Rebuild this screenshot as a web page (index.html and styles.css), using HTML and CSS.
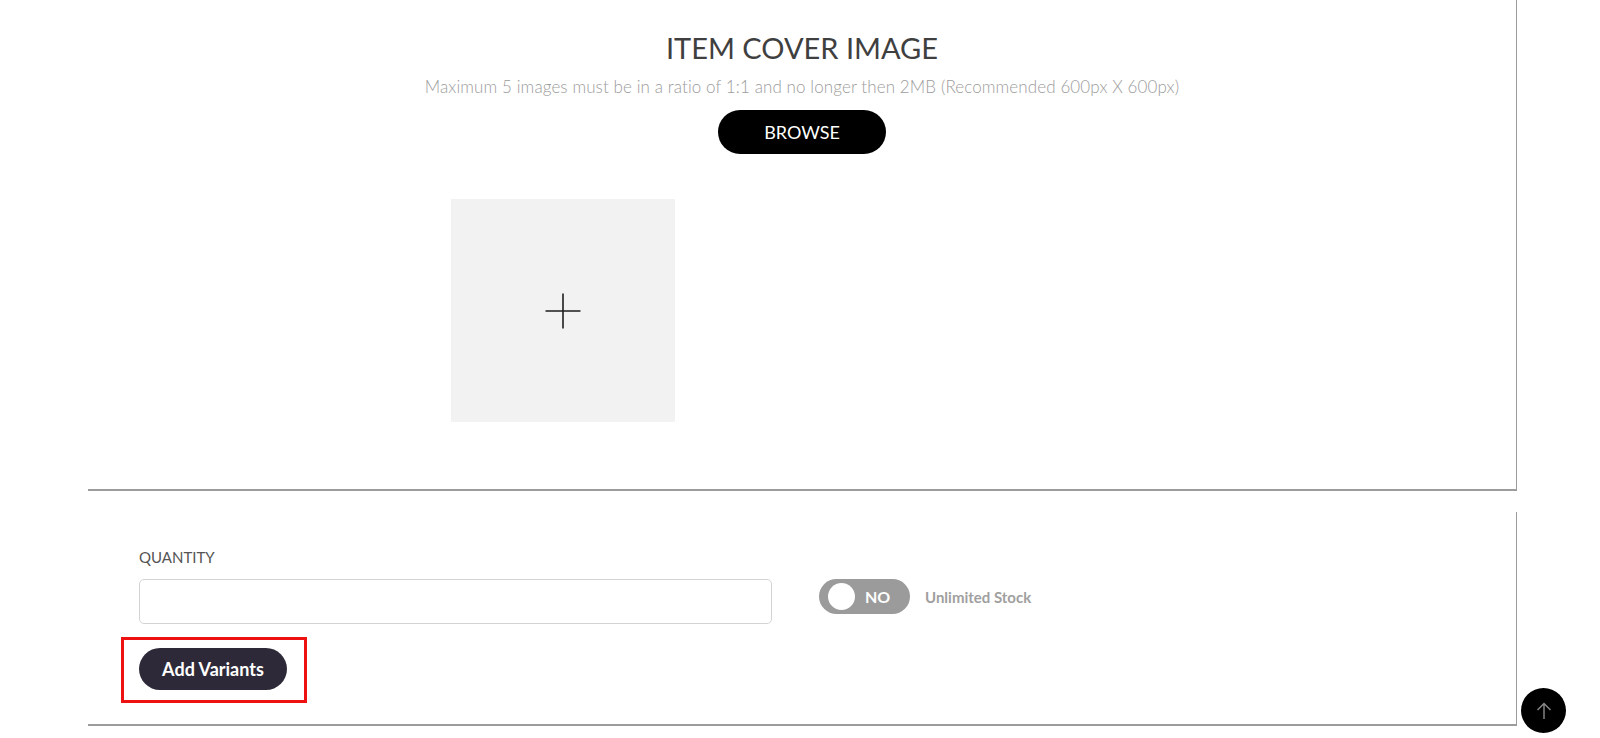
FILE: index.html
```html
<!DOCTYPE html>
<html lang="en">
<head>
<meta charset="utf-8">
<title>Item cover image</title>
<link rel="stylesheet" href="styles.css">
</head>
<body>
<main class="main">
  <section class="card card-cover">
    <h2 class="cover-title">ITEM COVER IMAGE</h2>
    <p class="cover-hint">Maximum 5 images must be in a ratio of 1:1 and no longer then 2MB (Recommended 600px X 600px)</p>
    <button class="browse-btn" type="button">BROWSE</button>
    <div class="gallery">
      <div class="thumb-add">
        <svg class="plus" width="36" height="36" viewBox="0 0 36 36" aria-hidden="true">
          <path d="M18 0.5V35.5M0.5 18H35.5" stroke="#1e1e1e" stroke-width="1.6" fill="none"/>
        </svg>
      </div>
    </div>
  </section>

  <section class="card card-qty">
    <label class="field-label" for="qty">QUANTITY</label>
    <div class="qty-row">
      <input class="qty-input" id="qty" type="text">
      <div class="stock">
        <span class="toggle"><span class="knob"></span><span class="toggle-text">NO</span></span>
        <span class="stock-label">Unlimited Stock</span>
      </div>
    </div>
    <div class="variants-wrap">
      <button class="variants-btn" type="button">Add Variants</button>
      <span class="highlight"></span>
    </div>
  </section>
</main>

<button class="to-top" type="button" aria-label="Back to top">
  <svg width="16" height="18" viewBox="0 0 16 18" aria-hidden="true">
    <path d="M8 17V1.5M1.5 8L8 1.5L14.5 8" stroke="#8a8a8a" stroke-width="1.4" fill="none"/>
  </svg>
</button>
</body>
</html>
```

FILE: styles.css
```css
* { box-sizing: border-box; }

html, body {
  margin: 0;
  padding: 0;
  background: #ffffff;
  font-family: Lato, "Open Sans", "Liberation Sans", sans-serif;
  color: #444;
}

.main {
  padding-left: 88px;
  width: 1517px;
}

.card {
  background: #fff;
  border-right: 1px solid #9c9c9c;
  border-bottom: 2px solid #9c9c9c;
}

.card-cover {
  padding: 30px 0 67px;
  display: flex;
  flex-direction: column;
  align-items: center;
}

.cover-title {
  margin: 0;
  font-size: 29px;
  line-height: 36px;
  font-weight: 400;
  color: #3f3f3f;
}

.cover-hint {
  margin: 11px 0 0;
  font-size: 17px;
  line-height: 20px;
  font-weight: 300;
  letter-spacing: 0.1px;
  color: #9c9c9c;
}

.browse-btn {
  margin-top: 13px;
  width: 168px;
  height: 44px;
  border: 0;
  border-radius: 22px;
  background: #000;
  color: #fff;
  font-family: inherit;
  font-size: 18px;
  font-weight: 400;
  padding: 0;
}

.gallery {
  margin-top: 45px;
  width: 702px;
  display: flex;
}

.thumb-add {
  width: 224px;
  height: 223px;
  background: #f2f2f2;
  display: flex;
  align-items: center;
  justify-content: center;
}

.card-qty {
  margin-top: 21px;
  padding: 36px 0 34px 51px;
  display: flex;
  flex-direction: column;
  align-items: flex-start;
}

.field-label {
  font-size: 15px;
  line-height: 18px;
  color: #555;
}

.qty-row {
  margin-top: 13px;
  display: flex;
  align-items: flex-start;
  gap: 47px;
}

.qty-input {
  width: 633px;
  height: 45px;
  border: 1px solid #d4d4d4;
  border-radius: 5px;
  background: #fff;
  font-family: inherit;
  font-size: 15px;
  padding: 0 12px;
}

.stock {
  display: flex;
  align-items: center;
  gap: 15px;
}

.toggle {
  width: 91px;
  height: 35px;
  border-radius: 18px;
  background: #9b9b9b;
  display: flex;
  align-items: center;
  padding-left: 9px;
}

.knob {
  width: 27px;
  height: 27px;
  border-radius: 50%;
  background: #fff;
}

.toggle-text {
  margin-left: 10px;
  color: #fff;
  font-size: 16px;
  font-weight: 700;
}

.stock-label {
  font-size: 15px;
  font-weight: 700;
  color: #a0a0a0;
}

.variants-wrap {
  position: relative;
  margin-top: 24px;
}

.variants-btn {
  width: 148px;
  height: 42px;
  border: 0;
  border-radius: 21px;
  background: #2e2938;
  color: #fff;
  font-family: inherit;
  font-size: 18px;
  font-weight: 700;
  padding: 0;
  display: block;
}

.highlight {
  position: absolute;
  left: -18px;
  top: -11px;
  right: -20px;
  bottom: -13px;
  border: 3px solid #ee1111;
  pointer-events: none;
}

.to-top {
  position: fixed;
  right: 34px;
  bottom: 5px;
  width: 45px;
  height: 45px;
  border-radius: 50%;
  border: 0;
  background: #000;
  padding: 0;
  display: flex;
  align-items: center;
  justify-content: center;
}
```
